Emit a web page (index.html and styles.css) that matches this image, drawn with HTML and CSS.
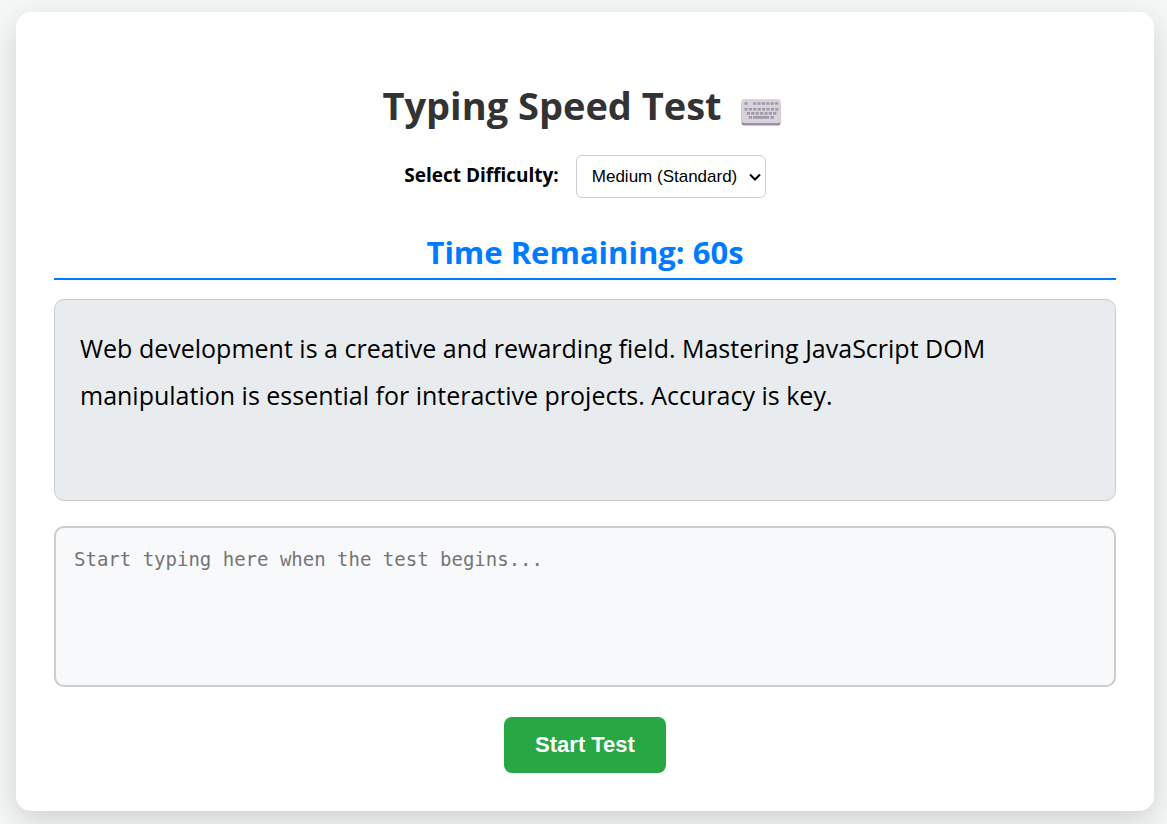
FILE: index.html
```html
<!DOCTYPE html>
<html lang="en">
<head>
<meta charset="utf-8">
<meta name="viewport" content="width=device-width, initial-scale=1">
<title>Typing Speed Test</title>
<link rel="stylesheet" href="styles.css">
</head>
<body>
<main class="container">
  <h1 class="title">Typing Speed Test
    <svg class="keyboard" viewBox="0 0 40 28" aria-hidden="true">
      <rect x="0.5" y="3" width="39" height="24.5" rx="2.5" fill="#998ea4"/>
      <rect x="0.5" y="1" width="39" height="24" rx="2.5" fill="#d8d1de"/>
      <g stroke="#a09ba4" stroke-width="2.6" fill="none">
        <path d="M3.5 5.5h3"/>
        <path d="M12 5.5h25.4" stroke-dasharray="3.2 1.2"/>
        <path d="M3.5 11.2h34" stroke-dasharray="3.2 1.2"/>
        <path d="M5.8 15.4h29.6" stroke-dasharray="3.2 1.2"/>
        <path d="M7.8 19.4h3.2M12 19.4h16M29.5 19.4h3.4"/>
      </g>
    </svg>
  </h1>
  <div class="difficulty">
    <label class="difficulty-label" for="difficulty">Select Difficulty:</label>
    <div class="select-wrap">
      <select class="difficulty-select" id="difficulty">
        <option>Easy (Short)</option>
        <option selected>Medium (Standard)</option>
        <option>Hard (Long)</option>
      </select>
      <svg class="chevron" viewBox="0 0 12 8" aria-hidden="true"><path d="M1 1.5l5 5 5-5" fill="none" stroke="#000" stroke-width="2"/></svg>
    </div>
  </div>
  <div class="timer">Time Remaining: 60s</div>
  <div class="passage">Web development is a creative and rewarding field. Mastering JavaScript DOM manipulation is essential for interactive projects. Accuracy is key.</div>
  <textarea class="entry" aria-label="Typing area" placeholder="Start typing here when the test begins..."></textarea>
  <button class="start" type="button">Start Test</button>
</main>
</body>
</html>
```
FILE: styles.css
```css
* { box-sizing: border-box; }
body {
  margin: 0;
  padding: 12px 13px 13px 16px;
  background: #f4f7f6;
  font-family: "Open Sans", "Noto Sans", sans-serif;
  color: #000;
}
.container {
  display: flex;
  flex-direction: column;
  align-items: center;
  padding: 62px 38px 38px;
  background: #fff;
  border-radius: 15px;
  box-shadow: 0 10px 30px rgba(0, 0, 0, 0.15);
}
.title {
  display: flex;
  align-items: center;
  gap: 19px;
  margin: 0 0 18px;
  padding-right: 7px;
  font-size: 38px;
  line-height: 63px;
  color: #333;
}
.keyboard { width: 40px; height: 28px; margin-top: 12px; }
.difficulty {
  display: flex;
  align-items: center;
  gap: 17px;
  margin-bottom: 31px;
}
.difficulty-label {
  padding-bottom: 3px;
  font-size: 19px;
  font-weight: 700;
}
.select-wrap { position: relative; display: flex; }
.difficulty-select {
  width: 190px;
  height: 43px;
  padding: 0 15px;
  appearance: none;
  border: 1px solid #ccc;
  border-radius: 6px;
  background: #fff;
  color: #000;
  font: 17px "Liberation Sans", Arial, sans-serif;
}
.chevron {
  position: absolute;
  top: 18px;
  right: 5px;
  width: 12px;
  height: 8px;
  pointer-events: none;
}
.timer {
  align-self: stretch;
  margin-bottom: 19px;
  padding-bottom: 3px;
  border-bottom: 2px solid #007bff;
  color: #007bff;
  font-size: 31px;
  line-height: 46px;
  font-weight: 700;
  text-align: center;
}
.passage {
  align-self: stretch;
  min-height: 202px;
  margin-bottom: 25px;
  padding: 25px;
  border: 1px solid #ccc;
  border-radius: 10px;
  background: #e9ecef;
  font-size: 25px;
  line-height: 47px;
}
.entry {
  align-self: stretch;
  height: 161px;
  margin-bottom: 30px;
  padding: 18px;
  border: 2px solid #ccc;
  border-radius: 10px;
  background: #f8f9fa;
  font: 19px/26px "DejaVu Sans Mono", monospace;
  resize: none;
}
.start {
  padding: 15px 31px;
  border: 0;
  border-radius: 8px;
  background: #28a745;
  color: #fff;
  font: bold 22px/26px "Liberation Sans", Arial, sans-serif;
}
```
